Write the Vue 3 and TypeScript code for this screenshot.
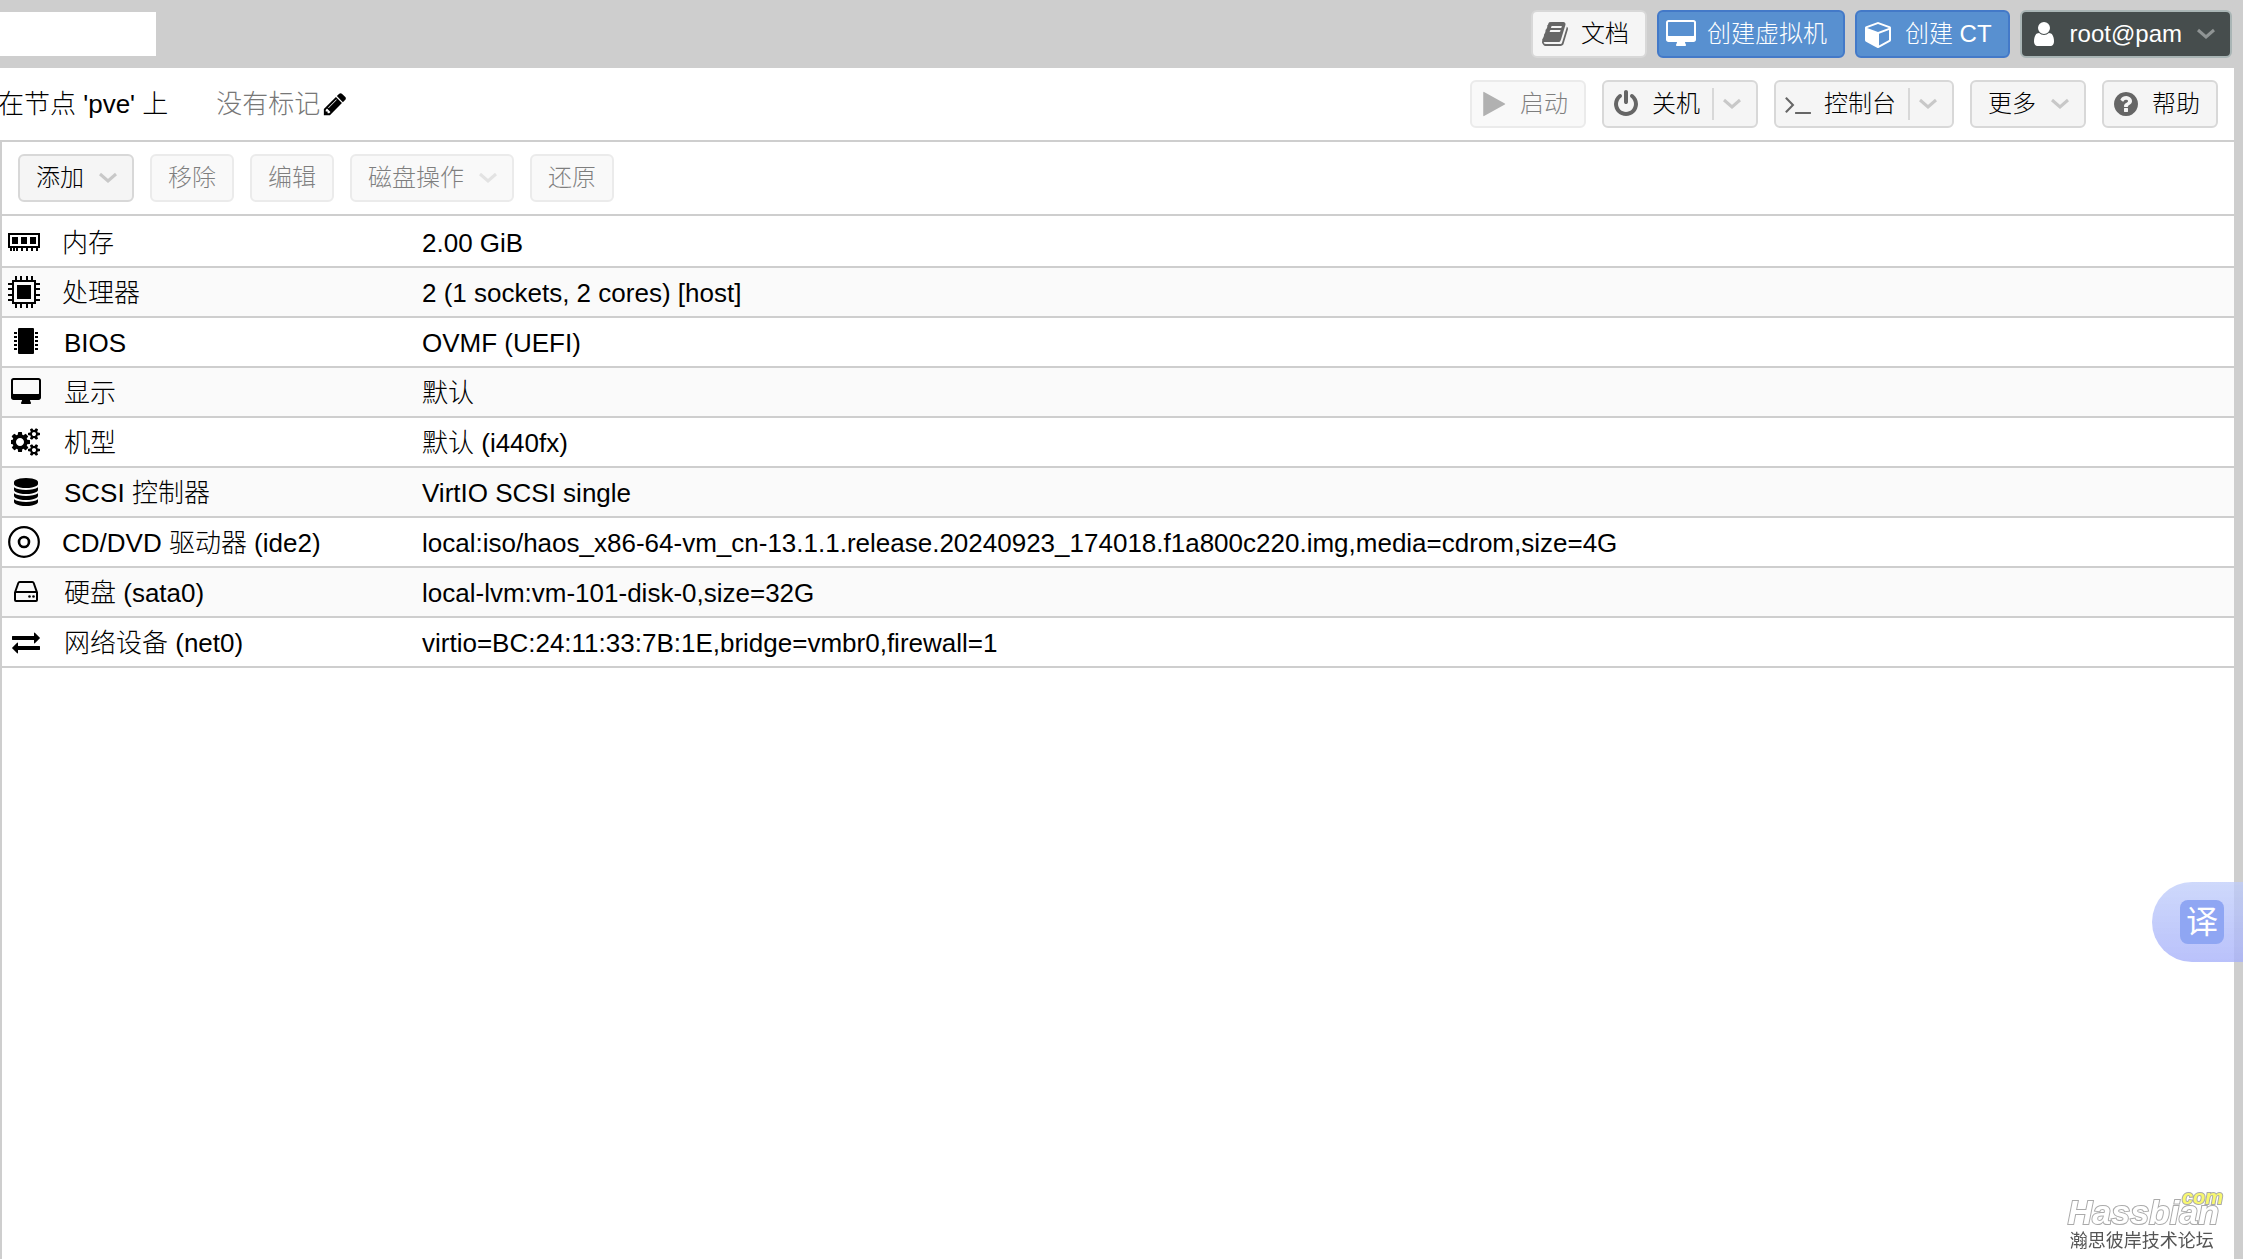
<script setup lang="ts">
interface Glyph {
  width: number
  path: string
}

interface HardwareRow {
  icon: string
  label: string
  value: string
}

// Glyphs share a 1792-unit tall grid; the width differs per glyph.
const glyphs: Record<string, Glyph> = {
  book: {
    width: 1792,
    path: 'M1703 478q40 57 18 129l-275 906q-19 64-76.5 107.5t-122.5 43.5h-923q-77 0-148.5-53.5t-99.5-131.5q-24-67-2-127 0-4 3-27t4-37q1-8-3-21.5t-3-19.5q2-11 8-21t16.5-23.5 16.5-23.5q23-38 45-91.5t30-91.5q3-10 .5-30t-.5-28q3-11 17-28t17-23q21-36 42-92t25-90q1-9-2.5-32t.5-28q4-13 22-30.5t22-22.5q19-26 42.5-84.5t27.5-96.5q1-8-3-25.5t-2-26.5q2-8 9-18t18-23 17-21q8-12 16.5-30.5t15-35 16-36 19.5-32 26.5-23.5 36-11.5 47.5 5.5l-1 3q38-9 51-9h761q74 0 114 56t18 130l-274 906q-36 119-71.5 153.5t-128.5 34.5h-869q-27 0-38 15-11 16-1 43 24 70 144 70h923q29 0 56-15.5t35-41.5l300-987q7-22 5-57 38 15 59 43zm-1064 2q-4 13 2 22.5t20 9.5h608q13 0 25.5-9.5t16.5-22.5l21-64q4-13-2-22.5t-20-9.5h-608q-13 0-25.5 9.5t-16.5 22.5zm-83 256q-4 13 2 22.5t20 9.5h608q13 0 25.5-9.5t16.5-22.5l21-64q4-13-2-22.5t-20-9.5h-608q-13 0-25.5 9.5t-16.5 22.5z',
  },
  desktop: {
    width: 2048,
    path: 'M1856 992v-832q0-13-9.5-22.5t-22.5-9.5h-1600q-13 0-22.5 9.5t-9.5 22.5v832q0 13 9.5 22.5t22.5 9.5h1600q13 0 22.5-9.5t9.5-22.5zm128-832v1088q0 66-47 113t-113 47h-544q0 37 16 77.5t32 71 16 43.5q0 26-19 45t-45 19h-512q-26 0-45-19t-19-45q0-14 16-44t32-70 16-78h-544q-66 0-113-47t-47-113v-1088q0-66 47-113t113-47h1600q66 0 113 47t47 113z',
  },
  cube: {
    width: 1792,
    path: 'M896 1629l640-349v-636l-640 233v752zm-64-865l698-254-698-254-698 254zm832-252v768q0 35-18 65t-49 47l-704 384q-28 16-61 16t-61-16l-704-384q-31-17-49-47t-18-65v-768q0-40 23-73t61-47l704-256q22-8 44-8t44 8l704 256q38 14 61 47t23 73z',
  },
  user: {
    width: 1792,
    path: 'M1536 1399q0 109-62.5 187t-150.5 78h-854q-88 0-150.5-78t-62.5-187q0-85 8.5-160.5t31.5-152 58.5-131 94-89 134.5-34.5q131 128 313 128t313-128q76 0 134.5 34.5t94 89 58.5 131 31.5 152 8.5 160.5zm-256-887q0 159-112.5 271.5t-271.5 112.5-271.5-112.5-112.5-271.5 112.5-271.5 271.5-112.5 271.5 112.5 112.5 271.5z',
  },
  play: {
    width: 1792,
    path: 'M1590 927l-1328 738q-23 13-39.5 3t-16.5-36v-1472q0-26 16.5-36t39.5 3l1328 738q23 13 23 31t-23 31z',
  },
  power: {
    width: 1792,
    path: 'M1664 896q0 156-61 298t-164 245-245 164-298 61-298-61-245-164-164-245-61-298q0-182 80.5-343t226.5-270q43-32 95.5-25t83.5 50q32 42 24.5 94.5t-49.5 84.5q-98 74-151.5 181t-53.5 228q0 104 40.5 198.5t109.5 163.5 163.5 109.5 198.5 40.5 198.5-40.5 163.5-109.5 109.5-163.5 40.5-198.5q0-121-53.5-228t-151.5-181q-42-32-49.5-84.5t24.5-94.5q31-43 84-50t95 25q146 109 226.5 270t80.5 343zm-640-768v640q0 52-38 90t-90 38-90-38-38-90v-640q0-52 38-90t90-38 90 38 38 90z',
  },
  terminal: {
    width: 1792,
    path: 'M649 983l-466 466q-10 10-23 10t-23-10l-50-50q-10-10-10-23t10-23l393-393-393-393q-10-10-10-23t10-23l50-50q10-10 23-10t23 10l466 466q10 10 10 23t-10 23zm1079 457v64q0 14-9 23t-23 9h-960q-14 0-23-9t-9-23v-64q0-14 9-23t23-9h960q14 0 23 9t9 23z',
  },
  help: {
    width: 1792,
    path: 'M1024 1376v-192q0-14-9-23t-23-9h-192q-14 0-23 9t-9 23v192q0 14 9 23t23 9h192q14 0 23-9t9-23zm256-672q0-88-55.5-163t-138.5-116-170-41q-243 0-371 213-15 24 8 42l132 100q7 6 19 6 16 0 25-12 53-68 86-92 34-24 86-24 48 0 85.5 26t37.5 59q0 38-20 61t-68 45q-63 28-115.5 86.5t-52.5 125.5v36q0 14 9 23t23 9h192q14 0 23-9t9-23q0-19 21.5-49.5t54.5-49.5q32-18 49-28.5t46-35 44.5-48 28-60.5 12.5-81zm384 192q0 209-103 385.5t-279.5 279.5-385.5 103-385.5-103-279.5-279.5-103-385.5 103-385.5 279.5-279.5 385.5-103 385.5 103 279.5 279.5 103 385.5z',
  },
  pencil: {
    width: 1792,
    path: 'M491 1536l91-91-235-235-91 91v107h128v128h107zm523-928q0-22-22-22-10 0-17 7l-542 542q-7 7-7 17 0 22 22 22 10 0 17-7l542-542q7-7 7-17zm-54-192l416 416-832 832h-416v-416zm683 96q0 53-37 90l-166 166-416-416 166-165q36-38 90-38 53 0 91 38l235 234q37 39 37 91z',
  },
  database: {
    width: 1792,
    path: 'M896 768q237 0 443-43t325-127v170q0 69-103 128t-280 93.5-385 34.5-385-34.5-280-93.5-103-128v-170q119 84 325 127t443 43zm0 768q237 0 443-43t325-127v170q0 69-103 128t-280 93.5-385 34.5-385-34.5-280-93.5-103-128v-170q119 84 325 127t443 43zm0-384q237 0 443-43t325-127v170q0 69-103 128t-280 93.5-385 34.5-385-34.5-280-93.5-103-128v-170q119 84 325 127t443 43zm0-1152q208 0 385 34.5t280 93.5 103 128v128q0 69-103 128t-280 93.5-385 34.5-385-34.5-280-93.5-103-128v-128q0-69 103-128t280-93.5 385-34.5z',
  },
  exchange: {
    width: 1792,
    path: 'M1792 1184v192q0 13-9.5 22.5t-22.5 9.5h-1376v192q0 13-9.5 22.5t-22.5 9.5q-12 0-24-10l-319-320q-9-9-9-22 0-14 9-23l320-320q9-9 23-9 13 0 22.5 9.5t9.5 22.5v192h1376q13 0 22.5 9.5t9.5 22.5zm0-544q0 14-9 23l-320 320q-9 9-23 9-13 0-22.5-9.5t-9.5-22.5v-192h-1376q-13 0-22.5-9.5t-9.5-22.5v-192q0-13 9.5-22.5t22.5-9.5h1376v-192q0-14 9-23t23-9q12 0 24 10l319 319q9 9 9 23z',
  },
  cogs: {
    width: 1920,
    path: 'M832 896q0-106-75-181t-181-75-181 75-75 181 75 181 181 75 181-75 75-181zm768 512q0-52-38-90t-90-38-90 38-38 90q0 53 37.5 90.5t90.5 37.5 90.5-37.5 37.5-90.5zm0-1024q0-52-38-90t-90-38-90 38-38 90q0 53 37.5 90.5t90.5 37.5 90.5-37.5 37.5-90.5zm-384 421v185q0 10-7 19.5t-16 10.5l-155 24q-11 35-32 76 34 48 90 115 7 11 7 20 0 12-7 19-23 30-82.5 89.5t-78.5 59.5q-11 0-21-7l-115-90q-37 19-77 31-11 108-23 155-7 24-30 24h-186q-11 0-20-7.5t-10-17.5l-23-153q-34-10-75-31l-118 89q-7 7-20 7-11 0-21-8-144-133-144-160 0-9 7-19 10-14 41-53t47-61q-23-44-35-82l-152-24q-10-1-17-9.5t-7-19.5v-185q0-10 7-19.5t16-10.5l155-24q11-35 32-76-34-48-90-115-7-11-7-20 0-12 7-20 22-30 82-89t79-59q11 0 21 7l115 90q34-18 77-32 11-108 23-154 7-24 30-24h186q11 0 20 7.5t10 17.5l23 153q34 10 75 31l118-89q8-7 20-7 11 0 21 8 144 133 144 160 0 8-7 19-12 16-42 54t-45 60q23 48 34 82l152 23q10 2 17 10.5t7 19.5zm640 533v140q0 16-149 31-12 27-30 52 51 113 51 138 0 4-4 7-122 71-124 71-8 0-46-47t-52-68q-20 2-30 2t-30-2q-14 21-52 68t-46 47q-2 0-124-71-4-3-4-7 0-25 51-138-18-25-30-52-149-15-149-31v-140q0-16 149-31 13-29 30-52-51-113-51-138 0-4 4-7 4-2 35-20t59-34 30-16q8 0 46 46.5t52 67.5q20-2 30-2t30 2q51-71 92-112l6-2q4 0 124 70 4 3 4 7 0 25-51 138 17 23 30 52 149 15 149 31zm0-1024v140q0 16-149 31-12 27-30 52 51 113 51 138 0 4-4 7-122 71-124 71-8 0-46-47t-52-68q-20 2-30 2t-30-2q-14 21-52 68t-46 47q-2 0-124-71-4-3-4-7 0-25 51-138-18-25-30-52-149-15-149-31v-140q0-16 149-31 13-29 30-52-51-113-51-138 0-4 4-7 4-2 35-20t59-34 30-16q8 0 46 46.5t52 67.5q20-2 30-2t30 2q51-71 92-112l6-2q4 0 124 70 4 3 4 7 0 25-51 138 17 23 30 52 149 15 149 31z',
  },
}

const viewBox = (name: string): string => `0 0 ${glyphs[name].width} 1792`

const topActions = [
  { icon: 'book', label: '文档', tone: '', menu: false },
  { icon: 'desktop', label: '创建虚拟机', tone: 'primary', menu: false },
  { icon: 'cube', label: '创建 CT', tone: 'primary', menu: false },
  { icon: 'user', label: 'root@pam', tone: 'account', menu: true },
]

const splitActions = [
  { icon: 'power', label: '关机' },
  { icon: 'terminal', label: '控制台' },
]

const hardwareActions = [
  { label: '添加', disabled: false, menu: true },
  { label: '移除', disabled: true, menu: false },
  { label: '编辑', disabled: true, menu: false },
  { label: '磁盘操作', disabled: true, menu: true },
  { label: '还原', disabled: true, menu: false },
]

const rows: HardwareRow[] = [
  { icon: 'memory', label: '内存', value: '2.00 GiB' },
  { icon: 'cpu', label: '处理器', value: '2 (1 sockets, 2 cores) [host]' },
  { icon: 'chip', label: 'BIOS', value: 'OVMF (UEFI)' },
  { icon: 'desktop', label: '显示', value: '默认' },
  { icon: 'cogs', label: '机型', value: '默认 (i440fx)' },
  { icon: 'database', label: 'SCSI 控制器', value: 'VirtIO SCSI single' },
  {
    icon: 'disc',
    label: 'CD/DVD 驱动器 (ide2)',
    value: 'local:iso/haos_x86-64-vm_cn-13.1.1.release.20240923_174018.f1a800c220.img,media=cdrom,size=4G',
  },
  { icon: 'hdd', label: '硬盘 (sata0)', value: 'local-lvm:vm-101-disk-0,size=32G' },
  { icon: 'exchange', label: '网络设备 (net0)', value: 'virtio=BC:24:11:33:7B:1E,bridge=vmbr0,firewall=1' },
]
</script>

<template>
  <div class="page">
    <header class="topbar">
      <input class="search" type="text" aria-label="搜索" />
      <div class="top-actions">
        <button v-for="a in topActions" :key="a.label" type="button" class="btn with-icon" :class="a.tone">
          <span class="icon">
            <svg class="glyph" :viewBox="viewBox(a.icon)" aria-hidden="true"><path :d="glyphs[a.icon].path" /></svg>
          </span>
          <span>{{ a.label }}</span>
          <svg v-if="a.menu" class="arrow" viewBox="0 0 20 12" aria-hidden="true"><path d="M2 2l8 7 8-7" /></svg>
        </button>
      </div>
    </header>

    <main class="panel">
      <div class="titlebar">
        <h1 class="title">在节点 'pve' 上</h1>
        <span class="tags">没有标记</span>
        <button type="button" class="edit-tags" aria-label="编辑标记">
          <svg :viewBox="viewBox('pencil')" aria-hidden="true"><path :d="glyphs.pencil.path" /></svg>
        </button>
        <div class="vm-actions">
          <button type="button" class="btn with-icon" disabled>
            <span class="icon">
              <svg class="glyph" :viewBox="viewBox('play')" aria-hidden="true"><path :d="glyphs.play.path" /></svg>
            </span>
            <span>启动</span>
          </button>
          <div v-for="s in splitActions" :key="s.label" class="split">
            <button type="button" class="split-main">
              <span class="icon">
                <svg class="glyph" :viewBox="viewBox(s.icon)" aria-hidden="true"><path :d="glyphs[s.icon].path" /></svg>
              </span>
              <span>{{ s.label }}</span>
            </button>
            <button type="button" class="split-menu" :aria-label="s.label + '菜单'">
              <svg class="arrow" viewBox="0 0 20 12" aria-hidden="true"><path d="M2 2l8 7 8-7" /></svg>
            </button>
          </div>
          <button type="button" class="btn">
            <span>更多</span>
            <svg class="arrow" viewBox="0 0 20 12" aria-hidden="true"><path d="M2 2l8 7 8-7" /></svg>
          </button>
          <button type="button" class="btn with-icon">
            <span class="icon">
              <svg class="glyph" :viewBox="viewBox('help')" aria-hidden="true"><path :d="glyphs.help.path" /></svg>
            </span>
            <span>帮助</span>
          </button>
        </div>
      </div>

      <section class="hardware">
        <div class="toolbar">
          <button v-for="h in hardwareActions" :key="h.label" type="button" class="btn" :disabled="h.disabled">
            <span>{{ h.label }}</span>
            <svg v-if="h.menu" class="arrow" viewBox="0 0 20 12" aria-hidden="true"><path d="M2 2l8 7 8-7" /></svg>
          </button>
        </div>

        <table class="grid">
          <tbody>
            <tr v-for="r in rows" :key="r.label">
              <th scope="row">
                <div class="name">
                  <svg v-if="r.icon === 'memory'" class="pic" viewBox="0 0 32 32" aria-hidden="true">
                    <path d="M0 7h32v15h-2v3h-2v-3h-3v3h-2v-3h-3v3h-2v-3h-3v3h-2v-3h-3v3h-2v-3H7v3H5v-3H4v3H2v-3H0zM2 9v11h28V9z" fill-rule="evenodd" />
                    <path d="M4 11h6v7H4zM13 11h6v7h-6zM22 11h6v7h-6z" />
                  </svg>
                  <svg v-else-if="r.icon === 'cpu'" class="pic" viewBox="0 0 32 32" aria-hidden="true">
                    <path d="M4 4h24v24H4zM6 6v20h20V6z" fill-rule="evenodd" />
                    <path d="M9 9h14v14H9z" />
                    <path d="M7 0h2v4H7zM12 0h2v4h-2zM18 0h2v4h-2zM23 0h2v4h-2zM7 28h2v4H7zM12 28h2v4h-2zM18 28h2v4h-2zM23 28h2v4h-2z" />
                    <path d="M0 7h4v2H0zM0 12h4v2H0zM0 18h4v2H0zM0 23h4v2H0zM28 7h4v2h-4zM28 12h4v2h-4zM28 18h4v2h-4zM28 23h4v2h-4z" />
                  </svg>
                  <svg v-else-if="r.icon === 'disc'" class="pic" viewBox="0 0 32 32" aria-hidden="true">
                    <circle cx="16" cy="16" r="14.8" fill="none" stroke="#000" stroke-width="2.2" />
                    <circle cx="16" cy="16" r="5" fill="none" stroke="#000" stroke-width="2.6" />
                  </svg>
                  <span v-else class="fixed">
                    <svg v-if="r.icon === 'chip'" class="glyph" viewBox="0 0 28 28" aria-hidden="true">
                      <rect x="6" y="0" width="16" height="26" rx="1" />
                      <path d="M2 4h3v2H2zM2 8h3v2H2zM2 12h3v2H2zM2 16h3v2H2zM2 20h3v2H2zM23 4h3v2h-3zM23 8h3v2h-3zM23 12h3v2h-3zM23 16h3v2h-3zM23 20h3v2h-3z" />
                    </svg>
                    <svg v-else-if="r.icon === 'hdd'" class="glyph" viewBox="0 0 28 28" aria-hidden="true">
                      <path d="M3 14.500L6.300 5q.4-1 1.400-1h12.600q1 0 1.400 1L25 14.500V22q0 1-1 1H4q-1 0-1-1zM3 14h22" fill="none" stroke="#000" stroke-width="2" />
                      <circle cx="17.500" cy="18.500" r="1.300" />
                      <circle cx="21.500" cy="18.500" r="1.300" />
                    </svg>
                    <svg v-else class="glyph" :viewBox="viewBox(r.icon)" aria-hidden="true"><path :d="glyphs[r.icon].path" /></svg>
                  </span>
                  <span class="label">{{ r.label }}</span>
                </div>
              </th>
              <td><div class="label">{{ r.value }}</div></td>
            </tr>
          </tbody>
        </table>
      </section>
    </main>

    <button type="button" class="translate" aria-label="翻译"><span>译</span></button>

    <div class="watermark">
      <div class="tld">com</div>
      <div class="brand">Hassbian</div>
      <div class="forum">瀚思彼岸技术论坛</div>
    </div>
  </div>
</template>

<style>
body {
  margin: 0;
  background: #cecece;
}
</style>

<style scoped>
.page {
  min-height: 100vh;
  display: flex;
  flex-direction: column;
  overflow: hidden;
  font-family: "Liberation Sans", "Noto Sans CJK SC", sans-serif;
  font-size: 26px;
  font-weight: 300;
  color: #000;
}

button {
  font: inherit;
  color: inherit;
  margin: 0;
}

.topbar {
  display: flex;
  justify-content: space-between;
  align-items: center;
  height: 68px;
  padding-right: 11px;
}

.search {
  width: 156px;
  height: 44px;
  border: 0;
  padding: 0 8px;
  box-sizing: border-box;
  background: #fff;
  font: inherit;
}

.top-actions {
  display: flex;
  gap: 10px;
}

.btn,
.split {
  display: flex;
  align-items: center;
  height: 48px;
  box-sizing: border-box;
  border: 2px solid #d8d8d8;
  border-radius: 6px;
  background: #f5f5f5;
  font-size: 24px;
  line-height: 32px;
  white-space: nowrap;
}

.btn {
  padding: 0 16px;
}

.btn.with-icon {
  padding-left: 6px;
}

.btn:disabled {
  opacity: 0.5;
}

.icon {
  display: flex;
  justify-content: center;
  width: 32px;
  margin-right: 10px;
  fill: #666;
}

.glyph {
  display: block;
  height: 28px;
  flex: none;
}

.arrow {
  width: 20px;
  height: 12px;
  margin-left: 14px;
  margin-right: -2px;
  fill: none;
  stroke: #c8c8c8;
  stroke-width: 3;
}

.primary {
  background: #5890d0;
  border-color: #4379c8;
  color: #fff;
}

.account {
  background: #464d4d;
  border-color: #a9b5b5;
  color: #fff;
}

.primary .icon,
.account .icon {
  fill: #fff;
}

.account .arrow {
  stroke: #8f9494;
}

.panel {
  flex: 1;
  display: flex;
  flex-direction: column;
  margin-right: 9px;
  background: #fff;
}

.titlebar {
  display: flex;
  align-items: center;
  height: 72px;
  padding-right: 16px;
}

.title {
  margin: 0 48px 0 -2px;
  font-size: 26px;
  font-weight: 300;
  line-height: 32px;
  white-space: nowrap;
}

.tags {
  line-height: 32px;
  color: #777;
}

.edit-tags {
  display: flex;
  padding: 0;
  border: 0;
  background: none;
  margin-left: 2px;
}

.edit-tags svg {
  width: 26px;
  height: 26px;
}

.vm-actions {
  display: flex;
  gap: 16px;
  margin-left: auto;
}

.split-main,
.split-menu {
  display: flex;
  align-items: center;
  height: 32px;
  border: 0;
  background: none;
}

.split-main {
  padding: 0 12px 0 6px;
}

.split-menu {
  width: 44px;
  padding: 0;
  border-left: 2px solid #d8d8d8;
}

.split-menu .arrow {
  margin: 0 0 0 8px;
}

.hardware {
  flex: 1;
  border-top: 2px solid #cecece;
  border-left: 2px solid #cecece;
}

.toolbar {
  display: flex;
  gap: 16px;
  padding: 12px 16px;
  border-bottom: 2px solid #cecece;
}

.grid {
  width: 100%;
  border-collapse: separate;
  border-spacing: 0;
  table-layout: fixed;
  line-height: 32px;
}

.grid th,
.grid td {
  height: 48px;
  padding: 0;
  border-bottom: 2px solid #cecece;
  text-align: left;
  font-weight: 300;
  white-space: nowrap;
  vertical-align: middle;
}

.grid th {
  width: 420px;
}

.grid tr:first-child > * {
  padding-top: 2px;
}

.grid tr:nth-child(even) {
  background: #fafafa;
}

.name {
  display: flex;
  align-items: center;
  padding-left: 6px;
}

.label {
  padding-top: 2px;
}

.pic {
  width: 32px;
  height: 32px;
  margin-right: 22px;
}

.fixed {
  display: flex;
  justify-content: center;
  width: 36px;
  margin-right: 20px;
}

.translate {
  position: fixed;
  right: 0;
  bottom: 297px;
  display: flex;
  align-items: center;
  width: 91px;
  height: 80px;
  padding: 0 0 0 28px;
  border: 0;
  border-radius: 40px 0 0 40px;
  background: linear-gradient(rgba(190, 204, 250, 0.75), rgba(168, 178, 250, 0.8));
}

.translate span {
  width: 44px;
  height: 44px;
  border-radius: 8px;
  background: #8fa6f3;
  color: #fff;
  font-size: 32px;
  font-weight: 400;
  line-height: 44px;
  text-align: center;
}

.watermark {
  position: fixed;
  right: 20px;
  bottom: 8px;
  padding-right: 4px;
}

.brand,
.tld {
  font-style: italic;
  font-weight: 700;
  paint-order: stroke fill;
  -webkit-text-stroke: 2px #aaa;
}

.tld {
  position: relative;
  z-index: 1;
  margin: 0 -4px -6px 0;
  font-size: 20px;
  line-height: 12px;
  text-align: right;
  color: #f8f870;
}

.brand {
  font-size: 34px;
  line-height: 30px;
  color: #fff;
}

.forum {
  padding: 4px 0 0 2px;
  font-size: 18px;
  font-weight: 400;
  line-height: 20px;
  color: #555;
}
</style>
